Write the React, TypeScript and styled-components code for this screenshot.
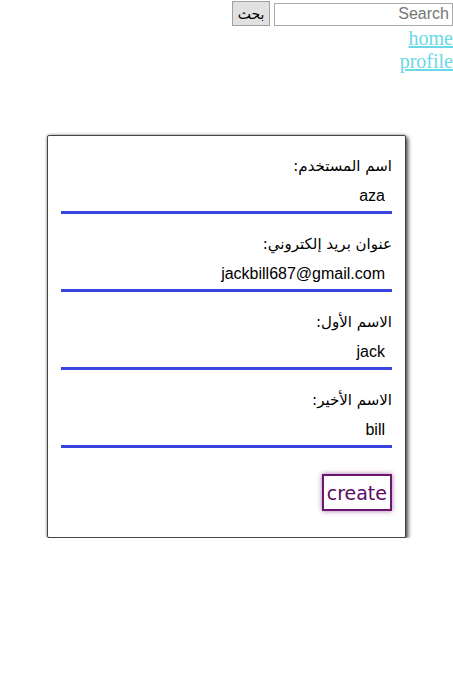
import React from "react";
import styled, { createGlobalStyle } from "styled-components";

const Global = createGlobalStyle`
  html, body { margin: 0; padding: 0; background: #fff; }
  body { direction: rtl; font-family: "Liberation Serif", serif; }
`;

const Header = styled.header`
  display: flex;
  flex-direction: row;
  align-items: center;
  gap: 4px;
  height: 27px;
`;

const SearchInput = styled.input`
  box-sizing: border-box;
  width: 179px;
  height: 23px;
  margin-top: 1px;
  border: 1px solid #a9a9a9;
  padding: 0 3px;
  font-family: "Liberation Sans", "DejaVu Sans", sans-serif;
  font-size: 16px;
  text-align: right;
  direction: rtl;
  &::placeholder { color: #767676; }
`;

const SearchButton = styled.button`
  box-sizing: border-box;
  width: 38px;
  height: 25px;
  padding: 0;
  border: 1px solid #a0a0a0;
  background: #e1e1e1;
  font-family: "DejaVu Sans", sans-serif;
  font-size: 14px;
  color: #000;
`;

const Nav = styled.nav`
  display: flex;
  flex-direction: column;
  align-items: flex-start;
`;

const NavLink = styled.a`
  font-family: "Liberation Serif", serif;
  font-size: 20px;
  line-height: 23px;
  color: #6ad8e6;
  text-decoration: underline;
`;

const Card = styled.form`
  box-sizing: border-box;
  width: 359px;
  margin: 62px auto 0;
  padding: 13px 13px 26px;
  border: 1px solid #444;
  border-radius: 2px;
  box-shadow: 2px 2px 4px rgba(0, 0, 0, 0.7), 0 0 3px rgba(0, 0, 0, 0.35);
  background: #fff;
  display: flex;
  flex-direction: column;
`;

const Field = styled.label`
  display: flex;
  flex-direction: column;
  padding-top: 7px;
  height: 71px;
`;

const LabelText = styled.span`
  font-family: "DejaVu Sans", sans-serif;
  font-size: 15px;
  line-height: 20px;
  color: #000;
`;

const ValueInput = styled.input`
  box-sizing: border-box;
  height: 38px;
  border: none;
  border-bottom: 3px solid #3b43e0;
  outline: none;
  padding: 4px 7px 0 7px;
  font-family: "Liberation Sans", "DejaVu Sans", sans-serif;
  font-size: 16px;
  color: #000;
  text-align: right;
  direction: ltr;
  background: transparent;
`;

const Actions = styled.div`
  display: flex;
  justify-content: flex-start;
  padding-top: 13px;
`;

const CreateButton = styled.button`
  box-sizing: border-box;
  height: 37px;
  padding: 0 3px;
  border: 2px solid #6a1670;
  background: #fff;
  color: #5b0a63;
  font-family: "DejaVu Sans", sans-serif;
  font-size: 19px;
  box-shadow: 0 0 5px rgba(110, 20, 120, 0.6);
`;

const fields = [
  { label: "اسم المستخدم:", value: "aza" },
  { label: "عنوان بريد إلكتروني:", value: "jackbill687@gmail.com" },
  { label: "الاسم الأول:", value: "jack" },
  { label: "الاسم الأخير:", value: "bill" },
];

export default function App() {
  return (
    <>
      <Global />
      <Header>
        <SearchInput placeholder="Search" />
        <SearchButton>بحث</SearchButton>
      </Header>
      <Nav>
        <NavLink href="#">home</NavLink>
        <NavLink href="#">profile</NavLink>
      </Nav>
      <Card onSubmit={(e) => e.preventDefault()}>
        {fields.map((f) => (
          <Field key={f.label}>
            <LabelText>{f.label}</LabelText>
            <ValueInput defaultValue={f.value} />
          </Field>
        ))}
        <Actions>
          <CreateButton type="submit">create</CreateButton>
        </Actions>
      </Card>
    </>
  );
}
